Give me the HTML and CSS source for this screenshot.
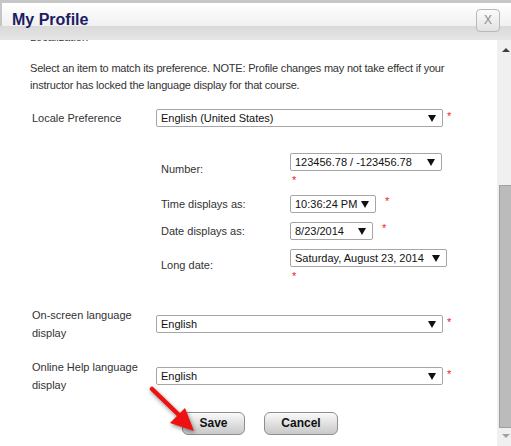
FILE: index.html
```html
<!DOCTYPE html>
<html>
<head>
<meta charset="utf-8">
<title>My Profile</title>
<link rel="stylesheet" href="styles.css">
</head>
<body>
<div class="dialog">
  <div class="header">
    <div class="header-top">
      <h1 class="title">My Profile</h1>
      <div class="close">X</div>
    </div>
    <div class="header-band"></div>
  </div>
  <div class="main">
    <div class="content">
      <div class="inner">
        <div class="section-title">Localization</div>
        <p class="note">Select an item to match its preference. NOTE: Profile changes may not take effect if your instructor has locked the language display for that course.</p>

        <div class="row row-locale">
          <div class="label">Locale Preference</div>
          <div class="field">
            <div class="select w-wide"><span class="val">English (United States)</span><span class="arrow"></span></div>
            <span class="star star-side">*</span>
          </div>
        </div>

        <div class="sub">
          <div class="sub-row tall">
            <div class="sub-label">Number:</div>
            <div class="sub-field col">
              <div class="select w-number"><span class="val">123456.78 / -123456.78</span><span class="arrow"></span></div>
              <span class="star star-below">*</span>
            </div>
          </div>
          <div class="sub-row">
            <div class="sub-label">Time displays as:</div>
            <div class="sub-field">
              <div class="select w-time"><span class="val">10:36:24 PM</span><span class="arrow"></span></div>
              <span class="star star-near">*</span>
            </div>
          </div>
          <div class="sub-row">
            <div class="sub-label">Date displays as:</div>
            <div class="sub-field">
              <div class="select w-date"><span class="val">8/23/2014</span><span class="arrow"></span></div>
              <span class="star star-near">*</span>
            </div>
          </div>
          <div class="sub-row tall">
            <div class="sub-label">Long date:</div>
            <div class="sub-field col">
              <div class="select w-long"><span class="val">Saturday, August 23, 2014</span><span class="arrow"></span></div>
              <span class="star star-below">*</span>
            </div>
          </div>
        </div>

        <div class="row row-lang">
          <div class="label">On-screen language display</div>
          <div class="field">
            <div class="select w-wide"><span class="val">English</span><span class="arrow"></span></div>
            <span class="star star-side">*</span>
          </div>
        </div>

        <div class="row row-help">
          <div class="label">Online Help language display</div>
          <div class="field">
            <div class="select w-wide"><span class="val">English</span><span class="arrow"></span></div>
            <span class="star star-side">*</span>
          </div>
        </div>

        <div class="buttons">
          <div class="btn btn-save">Save</div>
          <div class="btn btn-cancel">Cancel</div>
        </div>
      </div>
      <svg class="pointer" width="60" height="60" viewBox="0 0 60 60">
        <line x1="4" y1="4" x2="32" y2="31" stroke="#ee1111" stroke-width="4.5" stroke-linecap="round"/>
        <polygon points="22,38 37,23 46,46" fill="#ee1111"/>
      </svg>
    </div>
    <div class="scrollbar">
      <div class="sb-up"></div>
      <div class="sb-space"></div>
      <div class="sb-thumb"></div>
      <div class="sb-down"></div>
    </div>
  </div>
</div>
</body>
</html>
```
FILE: styles.css
```css
html, body {
  margin: 0;
  padding: 0;
  background: #ffffff;
}
body {
  font-family: "Liberation Sans", Arial, sans-serif;
  font-size: 11px;
  color: #333333;
}
.dialog {
  width: 511px;
  height: 446px;
  display: flex;
  flex-direction: column;
  overflow: hidden;
}
.header {
  height: 40px;
  border-top: 3px solid #c6c6c6;
  box-sizing: border-box;
  display: flex;
  flex-direction: column;
}
.header-top {
  height: 23px;
  border-left: 2px solid #c6c6c6;
  background: linear-gradient(#ffffff, #f0f0f0);
  position: relative;
}
.header-band {
  flex: 1;
  background: linear-gradient(#d9d9d9, #e6e6e6);
}
.title {
  margin: 0;
  position: absolute;
  left: 10px;
  top: 8px;
  font-size: 16px;
  line-height: 18px;
  font-weight: bold;
  color: #1c1c64;
}
.close {
  position: absolute;
  left: 474px;
  top: 6px;
  width: 24px;
  height: 23px;
  box-sizing: border-box;
  border: 1px solid #b3bac2;
  border-radius: 4px;
  background: linear-gradient(#fbfbfb, #e2e2e2);
  color: #8c8c8c;
  font-size: 12px;
  line-height: 21px;
  text-align: center;
  z-index: 2;
}
.main {
  flex: 1;
  display: flex;
  min-height: 0;
}
.content {
  flex: 1;
  overflow: hidden;
  position: relative;
}
.inner {
  margin-top: -10px;
}
.section-title {
  padding-left: 30px;
  line-height: 15px;
  height: 15px;
}
.note {
  margin: 15px 0 0 0;
  padding-left: 30px;
  padding-right: 20px;
  line-height: 17px;
  letter-spacing: -0.2px;
}
.row {
  display: flex;
  align-items: center;
  padding-left: 32px;
}
.row-locale { margin-top: 15px; }
.row-lang { margin-top: 24px; }
.row-help { margin-top: 16px; }
.label {
  width: 124px;
  line-height: 18px;
  padding-right: 4px;
  box-sizing: border-box;
}
.field {
  display: flex;
  align-items: flex-start;
}
.select {
  height: 18px;
  box-sizing: border-box;
  border: 1px solid #a6a6a6;
  border-radius: 2px;
  background: #ffffff;
  display: flex;
  align-items: center;
  justify-content: space-between;
  padding: 0 6px 0 4px;
  color: #111111;
  white-space: nowrap;
}
.val { line-height: 16px; }
.arrow {
  width: 0;
  height: 0;
  border-left: 4px solid transparent;
  border-right: 4px solid transparent;
  border-top: 7px solid #111111;
}
.w-wide { width: 287px; }
.w-number { width: 152px; }
.w-time { width: 86px; }
.w-date { width: 83px; }
.w-long { width: 157px; }
.star {
  color: #ee2222;
  font-size: 11px;
  line-height: 11px;
}
.star-side { margin-left: 4px; margin-top: 2px; }
.star-near { margin-left: 9px; margin-top: 1px; }
.star-below { margin-left: 2px; margin-top: 4px; height: 11px; }
.sub {
  margin-top: 26px;
  padding-left: 161px;
  display: flex;
  flex-direction: column;
  gap: 9px;
}
.sub-row {
  display: flex;
  align-items: center;
}
.sub-label {
  width: 129px;
  line-height: 15px;
}
.sub-field {
  display: flex;
  align-items: flex-start;
}
.sub-field.col {
  flex-direction: column;
  height: 33px;
}
.buttons {
  display: flex;
  gap: 19px;
  padding-left: 182px;
  margin-top: 18px;
}
.btn {
  height: 23px;
  box-sizing: border-box;
  border: 1px solid #8e8e8e;
  border-radius: 6px;
  background: linear-gradient(#fafafa, #dedede 55%, #c8c8c8);
  color: #111111;
  font-weight: bold;
  font-size: 12px;
  line-height: 21px;
  text-align: center;
}
.btn-save { width: 63px; }
.btn-cancel { width: 74px; }
.pointer {
  position: absolute;
  left: 148px;
  top: 345px;
  filter: drop-shadow(1px 2px 2px rgba(0,0,0,0.45));
}
.scrollbar {
  width: 14px;
  margin-left: 3px;
  background: #f0f0f0;
  display: flex;
  flex-direction: column;
  align-items: stretch;
}
.sb-up {
  height: 0;
  width: 0;
  margin: 8px 0 0 5px;
  border-left: 4px solid transparent;
  border-right: 4px solid transparent;
  border-bottom: 4px solid #404040;
}
.sb-space { height: 133px; }
.sb-thumb {
  height: 243px;
  margin-left: 2px;
  background: #bbbbbb;
  border-left: 1px solid #a0a0a0;
  border-top: 1px solid #a0a0a0;
  border-bottom: 1px solid #a0a0a0;
  box-sizing: border-box;
}
.sb-down {
  height: 0;
  width: 0;
  margin: 6px 0 0 5px;
  border-left: 4px solid transparent;
  border-right: 4px solid transparent;
  border-top: 4px solid #a0a0a0;
}
```
